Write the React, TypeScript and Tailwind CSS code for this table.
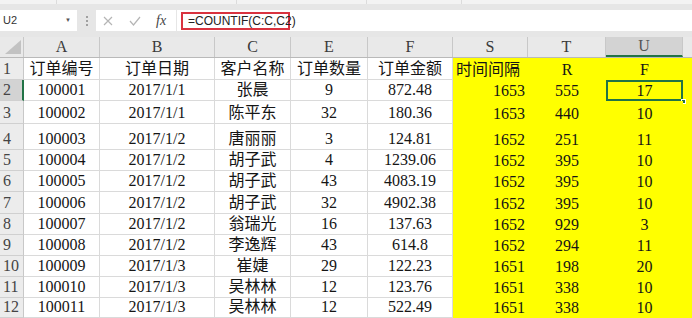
import React from 'react';

const cols = [
  { key: 'A', w: 76 },
  { key: 'B', w: 115 },
  { key: 'C', w: 76 },
  { key: 'E', w: 77 },
  { key: 'F', w: 85 },
  { key: 'S', w: 75 },
  { key: 'T', w: 78 },
  { key: 'U', w: 77 },
];

const rows: string[][] = [
  ['订单编号', '订单日期', '客户名称', '订单数量', '订单金额', '时间间隔', 'R', 'F'],
  ['100001', '2017/1/1', '张晨', '9', '872.48', '1653', '555', '17'],
  ['100002', '2017/1/1', '陈平东', '32', '180.36', '1653', '440', '10'],
  ['100003', '2017/1/2', '唐丽丽', '3', '124.81', '1652', '251', '11'],
  ['100004', '2017/1/2', '胡子武', '4', '1239.06', '1652', '395', '10'],
  ['100005', '2017/1/2', '胡子武', '43', '4083.19', '1652', '395', '10'],
  ['100006', '2017/1/2', '胡子武', '32', '4902.38', '1652', '395', '10'],
  ['100007', '2017/1/2', '翁瑞光', '16', '137.63', '1652', '929', '3'],
  ['100008', '2017/1/2', '李逸辉', '43', '614.8', '1652', '294', '11'],
  ['100009', '2017/1/3', '崔婕', '29', '122.23', '1651', '198', '20'],
  ['100010', '2017/1/3', '吴林林', '12', '123.76', '1651', '338', '10'],
  ['100011', '2017/1/3', '吴林林', '12', '522.49', '1651', '338', '10'],
];

const rowHeights = [22, 21, 23, 26, 21.2, 21.2, 21.2, 21.2, 21.2, 21.2, 21.2, 19.6];

const cellFont = { fontFamily: '"Liberation Serif", "Noto Sans CJK SC", serif' };

const Cell = ({ text, col, rowIdx }: { text: string; col: number; rowIdx: number }) => {
  const w = cols[col].w;
  const yellow = col >= 5;
  const isS = col === 5;
  const align = isS ? (rowIdx === 0 ? 'justify-start pl-[3px]' : 'justify-end pr-[3px]') : 'justify-center';
  const selected = col === 7 && rowIdx === 1;
  return (
    <div
      className={`relative flex shrink-0 items-end ${align} ${yellow ? 'bg-[#ffff00]' : 'bg-white border-r border-b border-[#dadada]'} text-[16px] leading-[18px] text-[#151515]`}
      style={{ width: w }}
    >
      <span className="pb-[1px]">{text}</span>
      {selected && (
        <>
          <div className="absolute inset-0 border-2 border-[#217346]" />
          <div className="absolute right-[-3px] bottom-[-3px] w-[5px] h-[5px] bg-[#217346] border border-white" />
        </>
      )}
    </div>
  );
};

export default function App() {
  return (
    <div className="w-[692px] h-[318px] overflow-hidden bg-white select-none" style={cellFont}>
      {/* ribbon remnant */}
      <div className="h-[4px] bg-[#f3f3f3] flex">
        <div className="w-[57px] border-r border-[#dcdcdc]" />
        <div className="w-[180px] border-r border-[#dcdcdc]" />
        <div className="w-[130px] border-r border-[#dcdcdc]" />
        <div className="w-[95px] border-r border-[#dcdcdc]" />
      </div>
      {/* formula bar */}
      <div className="h-[33px] bg-[#e6e6e6] pt-[6px] pb-[6px] flex items-stretch" style={{ fontFamily: '"Liberation Sans", "Noto Sans CJK SC", sans-serif' }}>
        <div className="w-[77px] bg-white flex items-center justify-between pl-[3px] pr-[6px] text-[11px] text-[#333]">
          <span>U2</span>
          <span className="text-[6px] text-[#555]">▼</span>
        </div>
        <div className="w-[19px] flex flex-col items-center justify-center gap-[2px]">
          <div className="w-[2px] h-[2px] bg-[#a0a0a0]" />
          <div className="w-[2px] h-[2px] bg-[#a0a0a0]" />
          <div className="w-[2px] h-[2px] bg-[#a0a0a0]" />
        </div>
        <div className="w-[80px] bg-white flex items-center pl-[6px] gap-[14px]">
          <svg width="12" height="12" viewBox="0 0 12 12"><path d="M2 2 L10 10 M10 2 L2 10" stroke="#b5b5b5" strokeWidth="1.2" /></svg>
          <svg width="14" height="12" viewBox="0 0 14 12"><path d="M2 6 L5.5 10 L12 2" stroke="#b5b5b5" strokeWidth="1.2" fill="none" /></svg>
          <span className="text-[14px] italic text-[#444]" style={{ fontFamily: '"Liberation Serif", serif' }}>fx</span>
        </div>
        <div className="flex-1 bg-white flex items-center pl-[4px] border-l border-[#e6e6e6]">
          <div className="h-[18px] w-[109px] border-2 border-[#d9333f] flex items-center pl-[5px] text-[12px] text-[#222]">
            =COUNTIF(C:C,C2)
          </div>
        </div>
      </div>
      {/* column headers */}
      <div className="h-[21px] flex bg-[#e9e9e9] border-b border-[#b9b9b9] text-[16px] text-[#3a3a3a]">
        <div className="w-[24px] shrink-0 relative border-r border-[#c8c8c8]">
          <svg className="absolute right-[2px] bottom-[3px]" width="16" height="14" viewBox="0 0 16 14"><path d="M16 0 L16 14 L0 14 Z" fill="#c2c2c2" /></svg>
        </div>
        {cols.map((c, i) => (
          <div
            key={c.key}
            className={`shrink-0 flex items-center justify-center border-r border-[#c8c8c8] ${i === 7 ? 'bg-[#d3d3d3] border-b-2 border-b-[#217346] text-[#555]' : ''}`}
            style={{ width: c.w }}
          >
            {c.key}
          </div>
        ))}
        <div className="flex-1" />
      </div>
      {/* rows */}
      {rows.map((r, ri) => (
        <div key={ri} className="flex" style={{ height: rowHeights[ri] }}>
          <div
            className={`w-[24px] shrink-0 flex items-end pl-[3px] pb-[1px] text-[16px] leading-[18px] text-[#444] border-b border-[#d0d0d0] ${ri === 1 ? 'bg-[#d3d3d3] border-r-2 border-r-[#217346]' : 'bg-[#ececec] border-r border-r-[#c8c8c8]'}`}
          >
            {ri + 1}
          </div>
          {r.map((t, ci) => (
            <Cell key={ci} text={t} col={ci} rowIdx={ri} />
          ))}
          <div className="flex-1 bg-[#ffff00]" />
        </div>
      ))}
    </div>
  );
}
